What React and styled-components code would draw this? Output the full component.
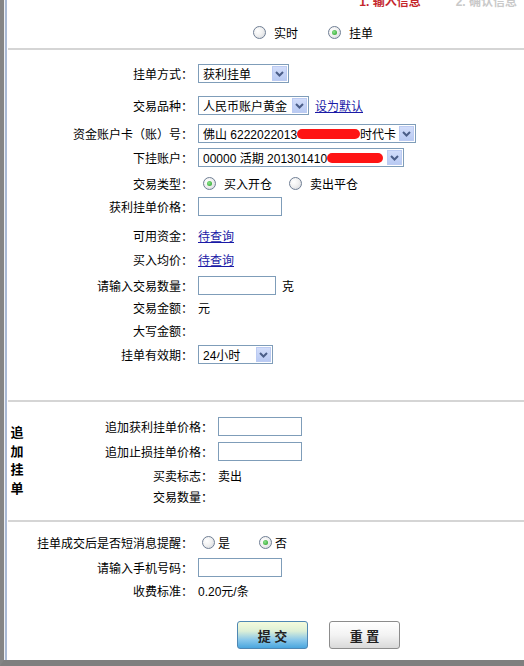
import React from 'react';
import styled, { createGlobalStyle, css } from 'styled-components';

const Global = createGlobalStyle`
  html, body { margin: 0; padding: 0; background: #fff; }
  body {
    font-family: "Liberation Sans", "Noto Sans CJK SC", sans-serif;
    font-size: 12px;
    color: #000;
  }
`;

const Shell = styled.div`
  width: 524px;
  height: 666px;
  box-sizing: border-box;
  border-left: 4px solid #858585;
  border-bottom: 6px solid #7f7f7f;
  background: #eef0f4;
  overflow: hidden;
`;

const Pane = styled.div`
  margin-left: 1px;
  height: 100%;
  border-left: 2px solid #a9b9d4;
  background: #fff;
`;

const Steps = styled.div`
  height: 8px;
  overflow: hidden;
  display: flex;
  justify-content: flex-end;
  align-items: flex-end;
  gap: 35px;
  padding-right: 7px;
`;

const Step = styled.span`
  font-weight: bold;
  font-size: 12px;
  line-height: 12px;
  white-space: nowrap;
  color: ${p => (p.$active ? '#c4262b' : '#c9c9c9')};
`;

const ModeBar = styled.div`
  height: 40px;
  box-sizing: border-box;
  padding: 8px 0 0 246px;
  display: flex;
  align-items: center;
`;

const Divider = styled.div`
  height: 2px;
  margin-left: 1px;
  background: #d5d5d5;
`;

const Option = styled.span`
  display: inline-flex;
  align-items: center;
  margin-left: ${p => p.$ml || 0}px;
`;

const Dot = styled.span`
  width: 13px;
  height: 13px;
  box-sizing: border-box;
  border-radius: 50%;
  border: 1px solid #6f7e94;
  background: radial-gradient(circle at 35% 35%, #fff 0%, #f1f1f1 45%, #d0d4da 100%);
  display: inline-flex;
  align-items: center;
  justify-content: center;
  flex: none;
  &::after {
    content: '';
    width: 5px;
    height: 5px;
    border-radius: 50%;
    background: radial-gradient(circle at 40% 40%, #8ee58e, #1f9b1f);
    display: ${p => (p.$on ? 'block' : 'none')};
  }
`;

const Caption = styled.span`
  margin-left: ${p => (p.$gap == null ? 8 : p.$gap)}px;
  white-space: nowrap;
`;

const Section = styled.div`
  padding-bottom: ${p => p.$pb || 0}px;
`;

const SideSection = styled.div`
  display: grid;
  grid-template-columns: 20px 1fr;
`;

const SideLabel = styled.div`
  align-self: center;
  justify-self: center;
  width: 13px;
  font-weight: bold;
  font-size: 13px;
  line-height: 18.5px;
  text-align: center;
  word-break: break-all;
`;

const Rows = styled.div`
  padding-bottom: 14px;
`;

const Row = styled.div`
  display: grid;
  grid-template-columns: 186px auto;
  column-gap: 5px;
  align-items: center;
  height: 19px;
  margin-top: ${p => p.$top || 0}px;
`;

const Label = styled.span`
  text-align: right;
  white-space: nowrap;
`;

const Field = styled.div`
  display: flex;
  align-items: center;
  white-space: nowrap;
`;

const Select = styled.div`
  display: flex;
  align-items: center;
  width: ${p => p.$w}px;
  height: 19px;
  box-sizing: border-box;
  border: 1px solid #7f9db9;
  background: #fff;
  padding: 1px 1px 1px 4px;
  white-space: nowrap;
`;

const SelectText = styled.span`
  flex: 1;
  display: flex;
  align-items: center;
  overflow: hidden;
`;

const ArrowBox = styled.span`
  width: 15px;
  height: 15px;
  box-sizing: border-box;
  flex: none;
  border: 1px solid #bccbf2;
  background: linear-gradient(#d2ddfa, #b9caf3);
  display: flex;
  align-items: center;
  justify-content: center;
`;

const Scribble = styled.span`
  display: inline-block;
  width: ${p => p.$w}px;
  height: 10px;
  border-radius: 5px;
  background: #fe1414;
  flex: none;
`;

const TextBox = styled.input`
  width: ${p => p.$w}px;
  height: 19px;
  box-sizing: border-box;
  margin: 0;
  padding: 0 2px;
  border: 1px solid #7f9db9;
  background: #fff;
  outline: none;
  font: inherit;
`;

const Link = styled.a`
  color: #1a1aa6;
  text-decoration: underline;
  margin-left: ${p => p.$ml || 0}px;
  cursor: pointer;
`;

const Unit = styled.span`
  margin-left: 6px;
`;

const Actions = styled.div`
  display: flex;
  gap: 21px;
  margin-top: 21px;
  padding-left: 230px;
`;

const Button = styled.button`
  width: 71px;
  height: 28px;
  padding: 0;
  border-radius: 3px;
  font-family: "Liberation Sans", "Noto Sans CJK SC", sans-serif;
  font-weight: bold;
  font-size: 13px;
  color: #222;
  cursor: pointer;
  ${p =>
    p.$primary
      ? css`
          border: 1px solid #4f87b3;
          background: linear-gradient(#f4fbdc 0%, #dcefd6 35%, #86c6ea 70%, #4aa6de 100%);
        `
      : css`
          border: 1px solid #8c8c8c;
          background: linear-gradient(#ffffff 0%, #f3f3f3 50%, #d9d9d9 100%);
        `}
`;

function Arrow() {
  return (
    <ArrowBox>
      <svg width="9" height="6" viewBox="0 0 9 6">
        <path d="M1 1 L4.5 4.5 L8 1" stroke="#4b5e88" strokeWidth="2" fill="none" />
      </svg>
    </ArrowBox>
  );
}

function Dropdown({ w, children }) {
  return (
    <Select $w={w}>
      <SelectText>{children}</SelectText>
      <Arrow />
    </Select>
  );
}

function Radio({ on, ml, gap, children }) {
  return (
    <Option $ml={ml}>
      <Dot $on={on} />
      <Caption $gap={gap}>{children}</Caption>
    </Option>
  );
}

export default function App() {
  return (
    <Shell>
      <Global />
      <Pane>
        <Steps>
          <Step $active>1. 输入信息</Step>
          <Step>2. 确认信息</Step>
        </Steps>
        <ModeBar>
          <Radio>实时</Radio>
          <Radio on ml={30}>挂单</Radio>
        </ModeBar>
        <Divider />

        <Section $pb={36}>
          <Row $top={14}>
            <Label>挂单方式：</Label>
            <Field><Dropdown w={91}>获利挂单</Dropdown></Field>
          </Row>
          <Row $top={13}>
            <Label>交易品种：</Label>
            <Field>
              <Dropdown w={111}>人民币账户黄金</Dropdown>
              <Link $ml={6}>设为默认</Link>
            </Field>
          </Row>
          <Row $top={9}>
            <Label>资金账户卡（账）号：</Label>
            <Field>
              <Dropdown w={218}>
                佛山 6222022013<Scribble $w={63} />时代卡
              </Dropdown>
            </Field>
          </Row>
          <Row $top={5}>
            <Label>下挂账户：</Label>
            <Field>
              <Dropdown w={206}>
                00000 活期 201301410<Scribble $w={56} />
              </Dropdown>
            </Field>
          </Row>
          <Row $top={7}>
            <Label>交易类型：</Label>
            <Field>
              <Radio on ml={5}>买入开仓</Radio>
              <Radio ml={17}>卖出平仓</Radio>
            </Field>
          </Row>
          <Row $top={4}>
            <Label>获利挂单价格：</Label>
            <Field><TextBox $w={84} /></Field>
          </Row>
          <Row $top={10}>
            <Label>可用资金：</Label>
            <Field><Link>待查询</Link></Field>
          </Row>
          <Row $top={5}>
            <Label>买入均价：</Label>
            <Field><Link>待查询</Link></Field>
          </Row>
          <Row $top={7}>
            <Label>请输入交易数量：</Label>
            <Field>
              <TextBox $w={78} />
              <Unit>克</Unit>
            </Field>
          </Row>
          <Row $top={3}>
            <Label>交易金额：</Label>
            <Field>元</Field>
          </Row>
          <Row $top={4}>
            <Label>大写金额：</Label>
            <Field />
          </Row>
          <Row $top={5}>
            <Label>挂单有效期：</Label>
            <Field><Dropdown w={75}>24小时</Dropdown></Field>
          </Row>
        </Section>
        <Divider />

        <SideSection>
          <SideLabel>追加挂单</SideLabel>
          <Rows>
            <Row $top={15}>
              <Label>追加获利挂单价格：</Label>
              <Field><TextBox $w={84} /></Field>
            </Row>
            <Row $top={6}>
              <Label>追加止损挂单价格：</Label>
              <Field><TextBox $w={84} /></Field>
            </Row>
            <Row $top={5}>
              <Label>买卖标志：</Label>
              <Field>卖出</Field>
            </Row>
            <Row $top={2}>
              <Label>交易数量：</Label>
              <Field />
            </Row>
          </Rows>
        </SideSection>
        <Divider />

        <Section>
          <Row $top={11}>
            <Label>挂单成交后是否短消息提醒：</Label>
            <Field>
              <Radio ml={4} gap={3}>是</Radio>
              <Radio on ml={29} gap={3}>否</Radio>
            </Field>
          </Row>
          <Row $top={6}>
            <Label>请输入手机号码：</Label>
            <Field><TextBox $w={84} /></Field>
          </Row>
          <Row $top={4}>
            <Label>收费标准：</Label>
            <Field>0.20元/条</Field>
          </Row>
        </Section>

        <Actions>
          <Button $primary>提 交</Button>
          <Button>重 置</Button>
        </Actions>
      </Pane>
    </Shell>
  );
}
